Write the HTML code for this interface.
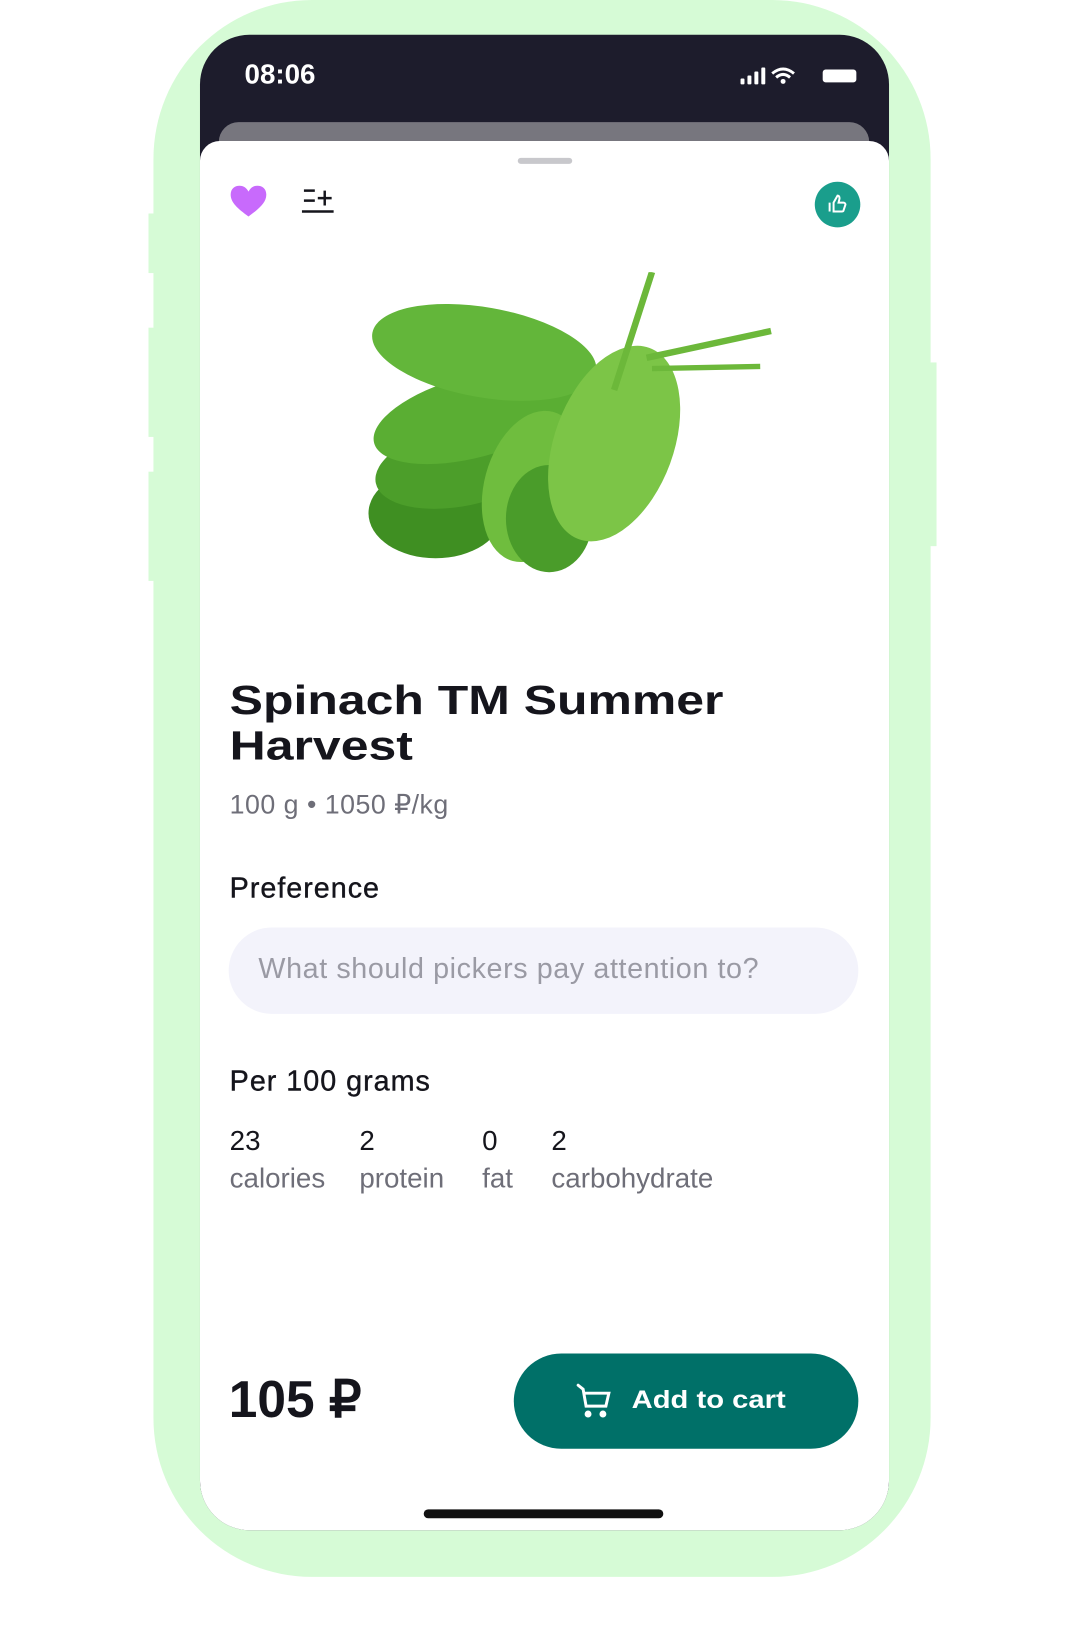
<!DOCTYPE html>
<html><head><meta charset="utf-8"><style>
*{margin:0;padding:0;box-sizing:border-box}
body{width:1076px;height:1628px;background:#fff;position:relative;overflow:hidden;font-family:"Liberation Sans",sans-serif}
#w{position:absolute;left:0;top:0;width:1076px;height:1650px;transform:scale(0.99,0.993);transform-origin:0 0}
.a{position:absolute}
.wide{font-weight:700;color:#15151c;transform-origin:left top;white-space:nowrap}
.g{color:#6e6e78}
</style></head><body><div id="w">
<div class="a" style="left:155px;top:0;width:785px;height:1588px;background:#d6fbd6;border-radius:160px"></div>
<div class="a" style="left:150px;top:215px;width:8px;height:60px;background:#d6fbd6"></div>
<div class="a" style="left:150px;top:330px;width:8px;height:110px;background:#d6fbd6"></div>
<div class="a" style="left:150px;top:475px;width:8px;height:110px;background:#d6fbd6"></div>
<div class="a" style="left:938px;top:365px;width:8px;height:185px;background:#d6fbd6"></div>
<div class="a" style="left:202px;top:35px;width:696px;height:1506px;background:#1d1c2c;border-radius:50px;overflow:hidden">
  <div class="a" style="left:19px;top:88px;width:657px;height:60px;background:#77767e;border-radius:20px"></div>
  <div class="a" style="left:0;top:107px;width:696px;height:1400px;background:#fff;border-radius:20px 20px 50px 50px"></div>
</div>
<div class="a" style="left:247px;top:59px;color:#fff;font-size:28px;font-weight:700">08:06</div>
<svg class="a" style="left:748px;top:65px" width="120" height="24" viewBox="0 0 120 24">
 <rect x="0" y="14" width="4" height="6" rx="1" fill="#fff"/><rect x="7" y="11" width="4" height="9" rx="1" fill="#fff"/><rect x="14" y="7" width="4" height="13" rx="1" fill="#fff"/><rect x="21" y="3" width="4" height="17" rx="1" fill="#fff"/>
 <path d="M32 9 Q43 0 54 9" stroke="#fff" stroke-width="3" fill="none"/><path d="M36 13 Q43 7 50 13" stroke="#fff" stroke-width="3" fill="none"/><circle cx="43" cy="17" r="2.5" fill="#fff"/>
 <rect x="83" y="5" width="34" height="13" rx="3" fill="#fff"/>
</svg>
<div class="a" style="left:523px;top:159px;width:55px;height:6px;border-radius:3px;background:#c8c8cc"></div>
<svg class="a" style="left:232px;top:186px" width="38" height="33" viewBox="0 0 38 33"><path d="M19 32 C8 24 1 18 1 10 C1 4 5 1 10 1 C14 1 17 3 19 7 C21 3 24 1 28 1 C33 1 37 4 37 10 C37 18 30 24 19 32Z" fill="#c86afc"/></svg>
<svg class="a" style="left:304px;top:188px" width="36" height="30" viewBox="0 0 36 30" stroke="#15151c" stroke-width="2.5" fill="none"><path d="M3 4H14M3 14H14M1 25H33M24 4V19M17 11.5H31"/></svg>
<div class="a" style="left:823px;top:183px;width:46px;height:46px;border-radius:50%;background:#1a9e8c"></div>
<svg class="a" style="left:834px;top:194px" width="24" height="24" viewBox="0 0 24 24" stroke="#fff" stroke-width="2" fill="none"><path d="M4 10v9M8 10l4-7c2 0 2 2 2 3l-1 4h5c1 0 2 1 2 2l-2 6c0 1-1 1-2 1H8z"/></svg>
<svg class="a" style="left:358px;top:274px" width="470" height="340" viewBox="0 0 430 315" preserveAspectRatio="none">
 <ellipse cx="75" cy="225" rx="62" ry="42" fill="#3f8f22"/>
 <ellipse cx="100" cy="180" rx="82" ry="38" fill="#4c9e2a" transform="rotate(-12 100 180)"/>
 <ellipse cx="110" cy="135" rx="95" ry="38" fill="#5aae33" transform="rotate(-15 110 135)"/>
 <ellipse cx="120" cy="75" rx="105" ry="42" fill="#63b63a" transform="rotate(10 120 75)"/>
 <ellipse cx="165" cy="200" rx="45" ry="72" fill="#6fbd3e" transform="rotate(15 165 200)"/>
 <ellipse cx="180" cy="230" rx="40" ry="50" fill="#4a9c2a"/>
 <ellipse cx="240" cy="160" rx="55" ry="95" fill="#7cc547" transform="rotate(20 240 160)"/>
 <path d="M240 110 L275 0" stroke="#6cb83a" stroke-width="6"/>
 <path d="M270 80 L385 55" stroke="#6cb83a" stroke-width="6"/>
 <path d="M275 90 L375 88" stroke="#6cb83a" stroke-width="5"/>
</svg>
<div class="a wide" style="left:232px;top:682px;font-size:41px;line-height:46px;transform:scaleX(1.23)">Spinach TM Summer<br>Harvest</div>
<div class="a g" style="left:232px;top:795px;font-size:27px;letter-spacing:0.5px">100 g • 1050 ₽/kg</div>
<div class="a" style="left:232px;top:879px;font-size:29px;letter-spacing:1px;color:#15151c;-webkit-text-stroke:0.4px #15151c">Preference</div>
<div class="a" style="left:231px;top:934px;width:636px;height:87px;border-radius:44px;background:#f3f3fb"></div>
<div class="a" style="left:261px;top:960px;font-size:29px;letter-spacing:0.6px;color:#9a9aa4">What should pickers pay attention to?</div>
<div class="a" style="left:232px;top:1073px;font-size:29px;letter-spacing:1px;color:#15151c;-webkit-text-stroke:0.4px #15151c">Per 100 grams</div>
<div class="a" style="left:232px;top:1130px;font-size:28px;color:#15151c;line-height:38px">23<br><span class="g">calories</span></div>
<div class="a" style="left:363px;top:1130px;font-size:28px;color:#15151c;line-height:38px">2<br><span class="g">protein</span></div>
<div class="a" style="left:487px;top:1130px;font-size:28px;color:#15151c;line-height:38px">0<br><span class="g">fat</span></div>
<div class="a" style="left:557px;top:1130px;font-size:28px;color:#15151c;line-height:38px">2<br><span class="g">carbohydrate</span></div>
<div class="a" style="left:231px;top:1380px;font-size:52px;font-weight:700;color:#15151c">105 ₽</div>
<div class="a" style="left:519px;top:1363px;width:348px;height:96px;border-radius:48px;background:#007068"></div>
<svg class="a" style="left:582px;top:1392px" width="38" height="38" viewBox="0 0 38 38" stroke="#fff" stroke-width="3" fill="none" stroke-linecap="round"><path d="M2 3 L7 7 L10 24 H30 L33 11 H9"/><circle cx="12" cy="32" r="2" fill="#fff"/><circle cx="27" cy="32" r="2" fill="#fff"/></svg>
<div class="a wide" style="left:638px;top:1396px;font-size:25px;color:#fff;transform:scaleX(1.18)">Add to cart</div>
<div class="a" style="left:428px;top:1520px;width:242px;height:9px;border-radius:5px;background:#111"></div>
</div></body></html>
